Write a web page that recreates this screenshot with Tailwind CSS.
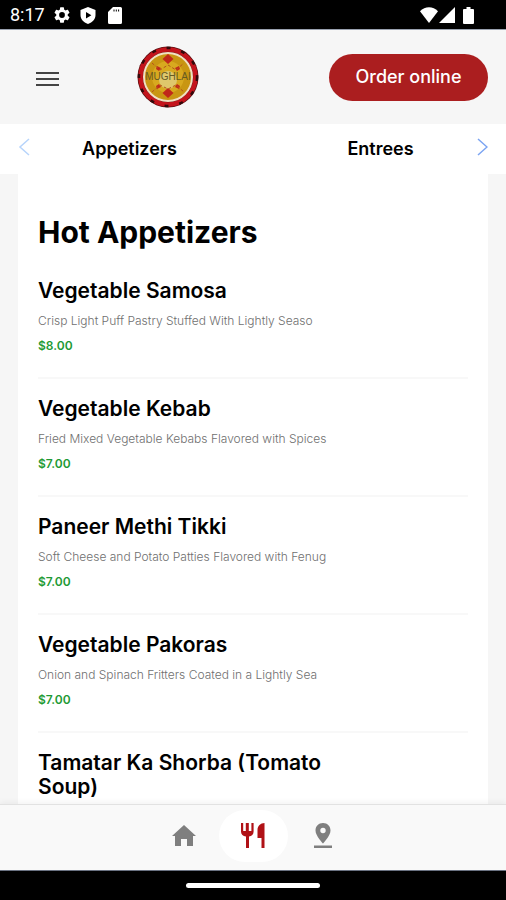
<!DOCTYPE html>
<html lang="en">
<head>
  <meta charset="UTF-8" />
  <meta name="viewport" content="width=device-width, initial-scale=1.0"/>
  <title>Mughlai | Menu</title>
  <script src="https://cdn.jsdelivr.net/npm/@tailwindcss/browser@4"></script>
</head>
<body class="h-screen overflow-hidden flex flex-col bg-[#f6f6f6] text-black font-['Inter',sans-serif]">

  <!-- Status bar -->
  <div class="h-[30px] shrink-0 bg-black text-white flex items-center justify-between pl-[10px] pr-8 pt-px border-b border-gray-400">
    <div class="flex items-center gap-[9px]">
      <span class="font-['Roboto',sans-serif] text-[18px] leading-6">8:17</span>
      <svg class="size-4" viewBox="2 2 20 20" fill="currentColor"><path d="M19.14 12.94c.04-.3.06-.61.06-.94s-.02-.64-.07-.94l2.03-1.58a.49.49 0 0 0 .12-.61l-1.92-3.32a.49.49 0 0 0-.59-.22l-2.39.96c-.5-.38-1.03-.7-1.62-.94l-.36-2.54a.48.48 0 0 0-.48-.41h-3.84a.48.48 0 0 0-.47.41l-.36 2.54c-.59.24-1.13.57-1.62.94l-2.39-.96a.48.48 0 0 0-.59.22L2.74 8.87a.48.48 0 0 0 .12.61l2.03 1.58c-.05.3-.09.63-.09.94s.02.64.07.94l-2.03 1.58a.49.49 0 0 0-.12.61l1.92 3.32c.12.22.37.29.59.22l2.39-.96c.5.38 1.03.7 1.62.94l.36 2.54c.05.24.24.41.48.41h3.84c.24 0 .44-.17.47-.41l.36-2.54c.59-.24 1.13-.56 1.62-.94l2.39.96c.22.08.47 0 .59-.22l1.92-3.32a.48.48 0 0 0-.12-.61l-2.01-1.58zM12 15.6a3.6 3.6 0 1 1 0-7.2 3.6 3.6 0 0 1 0 7.2z"/></svg>
      <svg class="h-[17px] w-4 ml-px" viewBox="0 0 16 17" fill="currentColor"><path fill-rule="evenodd" d="M8 0l7.500 3v5c0 4-3 7.500-7.500 9C3.500 15.500.5 12 .5 8V3zM6 5v6.600l5.400-3.300z"/></svg>
      <svg class="h-[17px] w-[14px] ml-[3px]" viewBox="0 0 14 17" fill="currentColor"><path fill-rule="evenodd" d="M5 0h7.500A1.500 1.500 0 0 1 14 1.500v14a1.500 1.500 0 0 1-1.500 1.500h-11A1.500 1.500 0 0 1 0 15.500V5zM5.500 2.500v2h1v-2zm2.300 0v2h1v-2zm2.300 0v2h1v-2z"/></svg>
    </div>
    <div class="flex items-center">
      <svg class="h-4 w-[18px]" viewBox="0 0 18 16" fill="currentColor"><path d="M9 16 0 4.300C5-1.100 13-1.100 18 4.300z"/></svg>
      <svg class="h-4 w-4 ml-px" viewBox="0 0 16 16" fill="currentColor"><path d="M16 0v16H0z"/></svg>
      <svg class="h-[17px] w-[11px] ml-2" viewBox="0 0 11 17" fill="currentColor"><path d="M3.500 0h4v2H10a1 1 0 0 1 1 1v13a1 1 0 0 1-1 1H1a1 1 0 0 1-1-1V3a1 1 0 0 1 1-1h2.500z"/></svg>
    </div>
  </div>

  <!-- Header -->
  <header class="h-[94px] shrink-0 flex items-center justify-between pl-9 pr-[18px]">
    <div class="flex items-center gap-[78px]">
      <button type="button" aria-label="Open menu" class="pt-1">
        <svg class="w-[23px] h-4" viewBox="0 0 23 16" stroke="#444" stroke-width="2"><path d="M0 2h23M0 8h23M0 14h23"/></svg>
      </button>
      <a href="#" aria-label="Mughlai home">
        <svg class="size-[62px]" viewBox="0 0 62 62">
          <circle cx="31" cy="31" r="30.500" fill="#5a1013"/>
          <circle cx="31" cy="31" r="27.500" fill="none" stroke="#c4141c" stroke-width="4.500"/>
          <circle cx="31" cy="31" r="29" fill="none" stroke="#33090b" stroke-width="2.500" stroke-dasharray="4 11"/>
          <circle cx="31" cy="31" r="24" fill="#c99612" stroke="#f3dfc2" stroke-width="2"/>
          <circle cx="31" cy="31" r="16" fill="#d8a91f"/>
          <circle cx="31" cy="34" r="9" fill="#dfc76c"/>
          <g fill="#c0281a">
            <path d="M31 8l5.500 5-5.500 5-5.500-5zM31 42l5.500 5-5.500 5-5.500-5z"/>
            <path d="M20 20l4 2-2 3-3-2zM42 20l-4 2 2 3 3-2zM20 43l4-2-2-3-3 2zM42 43l-4-2 2-3 3 2z"/>
          </g>
          <path d="M15 17l8 7 8-5 8 5 8-7M15 46l8-7 8 4 8-4 8 7" fill="none" stroke="#b5521c" stroke-width="1" stroke-dasharray="3 2"/>
          <text x="31" y="34" text-anchor="middle" font-family="Liberation Sans, sans-serif" font-size="10" fill="#665a22">MUGHLAI</text>
        </svg>
      </a>
    </div>
    <button type="button" class="h-[47px] w-[159px] rounded-full bg-[#ab1e1f] text-white text-[18px] leading-6 font-medium">Order online</button>
  </header>

  <!-- Category tabs -->
  <nav class="h-[50px] shrink-0 bg-white flex items-center px-[18px] text-[18px] leading-6 font-semibold">
    <button type="button" aria-label="Previous categories" class="pb-1">
      <svg class="w-3 h-[18px]" viewBox="0 0 12 18" fill="none" stroke="#b7d4fb" stroke-width="1.500"><path d="M11 1 2 9l9 8"/></svg>
    </button>
    <div class="flex-1 grid grid-cols-2 text-center pr-6 gap-6">
      <a href="#appetizers">Appetizers</a>
      <a href="#entrees" class="pl-14">Entrees</a>
    </div>
    <button type="button" aria-label="Next categories" class="pb-1">
      <svg class="w-3 h-[18px]" viewBox="0 0 12 18" fill="none" stroke="#7ba4f2" stroke-width="1.500"><path d="m2 1 9 8-9 8"/></svg>
    </button>
  </nav>

  <!-- Menu list -->
  <main id="appetizers" class="flex-1 min-h-0 overflow-hidden mx-[18px] bg-white px-5 pt-10">
    <h1 class="text-[30px] leading-9 font-bold">Hot Appetizers</h1>
    <ul class="mt-[11px]">
      <li class="pt-[18px] pb-4 border-b-2 border-[#f8f8f8]">
        <h2 class="text-[21px] leading-6 font-semibold max-w-[300px]">Vegetable Samosa</h2>
        <p class="mt-2 text-xs leading-5 font-light text-[#6f6f6f]">Crisp Light Puff Pastry Stuffed With Lightly Seaso</p>
        <p class="text-xs leading-[30px] font-semibold text-[#1f9a35]">$8.00</p>
      </li>
      <li class="pt-[18px] pb-4 border-b-2 border-[#f8f8f8]">
        <h2 class="text-[21px] leading-6 font-semibold max-w-[300px]">Vegetable Kebab</h2>
        <p class="mt-2 text-xs leading-5 font-light text-[#6f6f6f]">Fried Mixed Vegetable Kebabs Flavored with Spices</p>
        <p class="text-xs leading-[30px] font-semibold text-[#1f9a35]">$7.00</p>
      </li>
      <li class="pt-[18px] pb-4 border-b-2 border-[#f8f8f8]">
        <h2 class="text-[21px] leading-6 font-semibold max-w-[300px]">Paneer Methi Tikki</h2>
        <p class="mt-2 text-xs leading-5 font-light text-[#6f6f6f]">Soft Cheese and Potato Patties Flavored with Fenug</p>
        <p class="text-xs leading-[30px] font-semibold text-[#1f9a35]">$7.00</p>
      </li>
      <li class="pt-[18px] pb-4 border-b-2 border-[#f8f8f8]">
        <h2 class="text-[21px] leading-6 font-semibold max-w-[300px]">Vegetable Pakoras</h2>
        <p class="mt-2 text-xs leading-5 font-light text-[#6f6f6f]">Onion and Spinach Fritters Coated in a Lightly Sea</p>
        <p class="text-xs leading-[30px] font-semibold text-[#1f9a35]">$7.00</p>
      </li>
      <li class="pt-[18px] pb-4">
        <h2 class="text-[21px] leading-6 font-semibold max-w-[300px]">Tamatar Ka Shorba (Tomato Soup)</h2>
      </li>
    </ul>
  </main>

  <!-- Bottom navigation -->
  <nav class="h-[66px] shrink-0 bg-[#f9f9f9] border-t border-[#e2e2e2] shadow-[0_-2px_6px_rgba(0,0,0,0.05)] flex items-center justify-center gap-[21px] pb-1">
    <a href="#home" aria-label="Home" class="w-7 flex justify-center">
      <svg class="w-6 h-[21px]" viewBox="0 0 24 21" fill="#7f7f7f"><path d="M12 0 0 11h3v10h6v-7h6v7h6V11h3z"/></svg>
    </a>
    <a href="#menu" aria-label="Menu" class="h-[52px] w-[69px] rounded-full bg-white flex items-center justify-center">
      <svg class="w-6 h-[25px]" viewBox="0 0 24 25" fill="#b01116"><path d="M0 0h2.200v8h2.600V0h3v8h2.600V0h2.200v8.500c0 3-1.900 4.600-4.600 5V25H5V13.500C1.900 13 0 11.500 0 8.500zM23.500 0v25h-3V15h-4V7c0-4 3-7 7-7z"/></svg>
    </a>
    <a href="#location" aria-label="Location" class="w-7 flex justify-center">
      <svg class="w-[18px] h-[25px]" viewBox="0 0 18 25" fill="#7f7f7f"><path fill-rule="evenodd" d="M9 0c4.500 0 7.500 3.300 7.500 7.500C16.500 13 9 20.500 9 20.500S1.500 13 1.500 7.500C1.500 3.300 4.500 0 9 0zm0 4.800a2.700 2.700 0 1 0 0 5.400 2.700 2.700 0 0 0 0-5.400z"/><path d="M0 22.500h18V25H0z"/></svg>
    </a>
  </nav>

  <!-- System gesture bar -->
  <div class="h-[30px] shrink-0 bg-black border-t border-gray-500 flex items-center justify-center">
    <div class="w-[134px] h-[5px] rounded-full bg-white"></div>
  </div>

</body>
</html>
